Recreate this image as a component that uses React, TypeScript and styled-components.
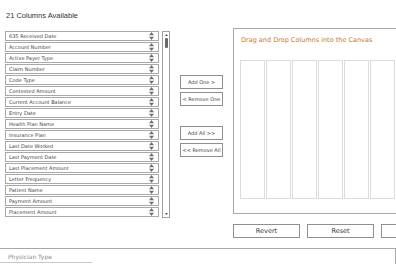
import styled, { createGlobalStyle } from "styled-components";

const GlobalStyle = createGlobalStyle`
  html, body {
    margin: 0;
    padding: 0;
    overflow: hidden;
    background: #ffffff;
  }
  body {
    font-family: "DejaVu Sans", "Liberation Sans", sans-serif;
    color: #333333;
  }
`;

const columns = [
  "635 Received Date",
  "Account Number",
  "Active Payer Type",
  "Claim Number",
  "Code Type",
  "Contested Amount",
  "Current Account Balance",
  "Entry Date",
  "Health Plan Name",
  "Insurance Plan",
  "Last Date Worked",
  "Last Payment Date",
  "Last Placement Amount",
  "Letter Frequency",
  "Patient Name",
  "Payment Amount",
  "Placement Amount",
];

const Page = styled.div`
  width: 396px;
  height: 264px;
  display: flex;
  flex-direction: column;
  overflow: hidden;
`;

const Heading = styled.div`
  flex-shrink: 0;
  font-family: "Liberation Sans", Arial, sans-serif;
  font-size: 7.5px;
  color: #333;
  padding: 11px 0 0 6px;
  height: 28px;
  box-sizing: border-box;
`;

const Main = styled.div`
  flex-shrink: 0;
  display: flex;
  align-items: flex-start;
  width: 396px;
  overflow: hidden;
`;

const List = styled.div`
  flex-shrink: 0;
  margin: 3px 0 0 5px;
  width: 154px;
  display: flex;
  flex-direction: column;
  gap: 1px;
`;

const Row = styled.div`
  height: 10px;
  box-sizing: border-box;
  border: 1px solid #a8a8a8;
  background: #fff;
  display: flex;
  align-items: center;
  justify-content: space-between;
  padding: 0 4px 0 3px;
  font-size: 5px;
  color: #444;
`;

const Scrollbar = styled.div`
  flex-shrink: 0;
  margin: 3px 0 0 3px;
  width: 8px;
  height: 187px;
  box-sizing: border-box;
  border: 1px solid #a0a0a0;
  display: flex;
  flex-direction: column;
  align-items: center;
  padding: 2px 0;
`;

const Thumb = styled.div`
  width: 3px;
  height: 10px;
  margin-top: 2px;
  background: #6a6a6a;
  border-radius: 1px;
`;

const Spacer = styled.div`
  flex: 1;
`;

const ButtonColumn = styled.div`
  flex-shrink: 0;
  margin: 47px 0 0 10px;
  width: 43px;
  display: flex;
  flex-direction: column;
`;

const SmallButton = styled.div<{ $gapTop?: number }>`
  margin-top: ${(p) => p.$gapTop ?? 3}px;
  height: 14px;
  box-sizing: border-box;
  border: 1px solid #8f8f8f;
  background: #fff;
  font-size: 5px;
  color: #444;
  white-space: nowrap;
  display: flex;
  align-items: center;
  justify-content: center;
`;

const RightColumn = styled.div`
  flex-shrink: 0;
  margin-left: 10px;
  display: flex;
  flex-direction: column;
`;

const Canvas = styled.div`
  width: 240px;
  height: 186px;
  box-sizing: border-box;
  border: 1px solid #a8a8a8;
  border-right: none;
  padding: 0 0 0 6px;
  overflow: hidden;
`;

const CanvasTitle = styled.div`
  font-size: 6.5px;
  color: #c8782e;
  padding: 7px 0 0 1px;
  height: 31px;
  box-sizing: border-box;
`;

const Grid = styled.div`
  display: flex;
  gap: 1px;
  height: 139px;
`;

const GridColumn = styled.div`
  flex: 0 0 25px;
  box-sizing: border-box;
  border: 1px solid #dcdcdc;
`;

const ActionRow = styled.div`
  margin-top: 10px;
  display: flex;
  gap: 7px;
`;

const ActionButton = styled.div`
  width: 67px;
  height: 14px;
  box-sizing: border-box;
  border: 1px solid #8f8f8f;
  font-size: 6.5px;
  color: #333;
  display: flex;
  align-items: center;
  justify-content: center;
  flex-shrink: 0;
`;

const Footer = styled.div`
  flex-shrink: 0;
  margin-top: 10px;
  height: 16px;
  box-sizing: border-box;
  border-top: 1px solid #a8a8a8;
  border-right: 1px solid #a8a8a8;
  width: 396px;
`;

const FooterField = styled.div`
  width: 92px;
  height: 14px;
  box-sizing: border-box;
  border-bottom: 1px solid #c8c8c8;
  font-size: 6px;
  color: #8a8a8a;
  padding: 4px 0 0 8px;
`;

function SortIcon() {
  return (
    <svg width="5" height="8" viewBox="0 0 5 8">
      <polygon points="2.5,0 5,3.3 0,3.3" fill="#6f6f6f" />
      <polygon points="0,4.7 5,4.7 2.5,8" fill="#6f6f6f" />
    </svg>
  );
}

function Arrow({ down }: { down?: boolean }) {
  return (
    <svg width="3" height="2" viewBox="0 0 3 2">
      <polygon points={down ? "0,0 3,0 1.5,2" : "1.5,0 3,2 0,2"} fill="#555" />
    </svg>
  );
}

export default function App() {
  return (
    <Page>
      <GlobalStyle />
      <Heading>21 Columns Available</Heading>
      <Main>
        <List>
          {columns.map((c) => (
            <Row key={c}>
              <span>{c}</span>
              <SortIcon />
            </Row>
          ))}
        </List>
        <Scrollbar>
          <Arrow />
          <Thumb />
          <Spacer />
          <Arrow down />
        </Scrollbar>
        <ButtonColumn>
          <SmallButton $gapTop={0}>Add One &gt;</SmallButton>
          <SmallButton>&lt; Remove One</SmallButton>
          <SmallButton $gapTop={20}>Add All &gt;&gt;</SmallButton>
          <SmallButton>&lt;&lt; Remove All</SmallButton>
        </ButtonColumn>
        <RightColumn>
          <Canvas>
            <CanvasTitle>Drag and Drop Columns into the Canvas</CanvasTitle>
            <Grid>
              {Array.from({ length: 8 }).map((_, i) => (
                <GridColumn key={i} />
              ))}
            </Grid>
          </Canvas>
          <ActionRow>
            <ActionButton>Revert</ActionButton>
            <ActionButton>Reset</ActionButton>
            <ActionButton />
          </ActionRow>
        </RightColumn>
      </Main>
      <Footer>
        <FooterField>Physician Type</FooterField>
      </Footer>
    </Page>
  );
}
